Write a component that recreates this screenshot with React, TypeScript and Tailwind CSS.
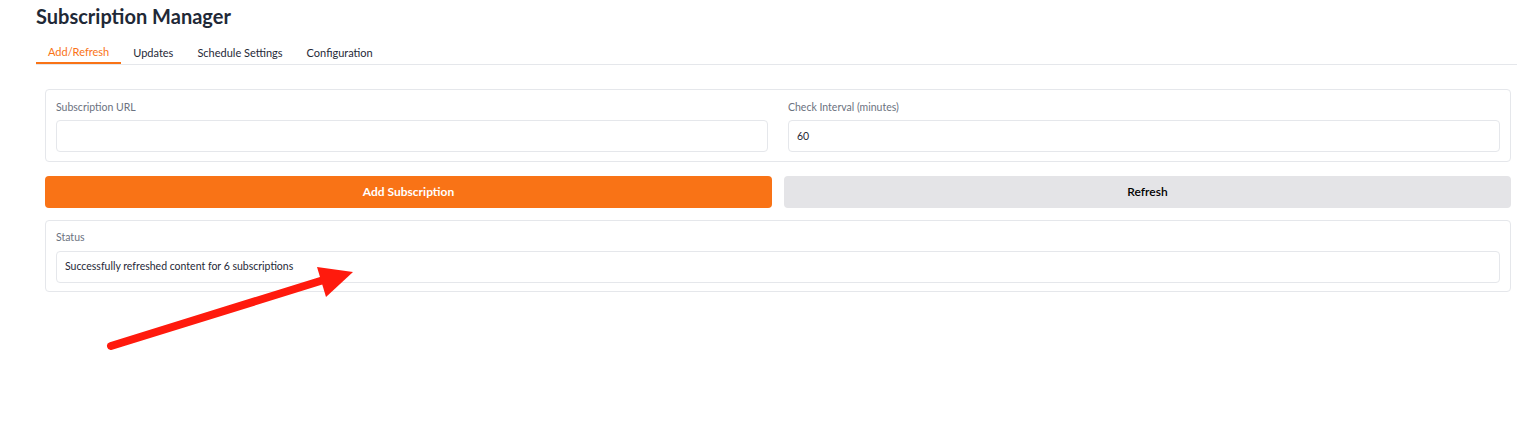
import React, { useState } from "react";

const tabs = ["Add/Refresh", "Updates", "Schedule Settings", "Configuration"];

const App: React.FC = () => {
  const [active, setActive] = useState("Add/Refresh");
  const [url, setUrl] = useState("");
  const [interval, setInterval] = useState("60");

  return (
    <div className="w-[1517px] h-[427px] bg-white relative font-['Lato',_'Liberation_Sans',_sans-serif] text-[#1f2937]">
      <div className="pl-[36px]">
        <h1 className="pt-[4px] text-[20px] leading-[24px] font-bold text-[#1f2937]">Subscription Manager</h1>

        {/* Tabs */}
        <div className="mt-[11px] flex border-b border-[#e5e7eb]">
          {tabs.map((t) => (
            <button
              key={t}
              onClick={() => setActive(t)}
              className={
                active === t
                  ? "px-3 pt-[4px] h-[25px] text-[11px] text-[#f97316] border-b-2 border-[#f97316] -mb-px"
                  : "px-3 pt-[3px] h-[25px] text-[11px] text-[#1f2937]"
              }
            >
              {t}
            </button>
          ))}
        </div>

        {/* Content */}
        <div className="pl-[9px] pr-[6px] pt-[24px] flex flex-col">
          <div className="grid grid-cols-2 gap-[20px] border border-[#e5e7eb] rounded-[4px] px-[10px] pt-[10px] pb-[9px]">
            <div className="flex flex-col">
              <label className="text-[10.5px] leading-[14px] text-[#6b7280] mb-[6px]">Subscription URL</label>
              <input
                value={url}
                onChange={(e) => setUrl(e.target.value)}
                className="h-[32px] border border-[#e5e7eb] rounded-[4px] px-[8px] text-[10.5px] outline-none"
              />
            </div>
            <div className="flex flex-col">
              <label className="text-[10.5px] leading-[14px] text-[#6b7280] mb-[6px]">Check Interval (minutes)</label>
              <input
                value={interval}
                onChange={(e) => setInterval(e.target.value)}
                className="h-[32px] border border-[#e5e7eb] rounded-[4px] px-[8px] text-[10.5px] text-[#1f2937] outline-none"
              />
            </div>
          </div>

          <div className="mt-[14px] grid grid-cols-2 gap-[12px]">
            <button className="h-[32px] rounded-[4px] bg-[#f97316] text-white text-[12px] font-bold">Add Subscription</button>
            <button className="h-[32px] rounded-[4px] bg-[#e4e4e7] text-black text-[12px] font-semibold">Refresh</button>
          </div>

          <div className="mt-[12px] border border-[#e5e7eb] rounded-[4px] px-[10px] pt-[9px] pb-[8px]">
            <div className="text-[10.5px] leading-[14px] text-[#6b7280] mb-[7px]">Status</div>
            <div className="h-[32px] border border-[#e5e7eb] rounded-[4px] px-[8px] flex items-center text-[10.5px] text-[#1f2937]">
              Successfully refreshed content for 6 subscriptions
            </div>
          </div>
        </div>
      </div>

      {/* annotation arrow */}
      <svg className="absolute left-0 top-0 pointer-events-none" width="1517" height="427">
        <line x1="111" y1="346" x2="330" y2="278" stroke="#ff1a0d" strokeWidth="8" strokeLinecap="round" />
        <polygon points="353,272 317,267 326,297" fill="#ff1a0d" />
      </svg>
    </div>
  );
};

export default App;
